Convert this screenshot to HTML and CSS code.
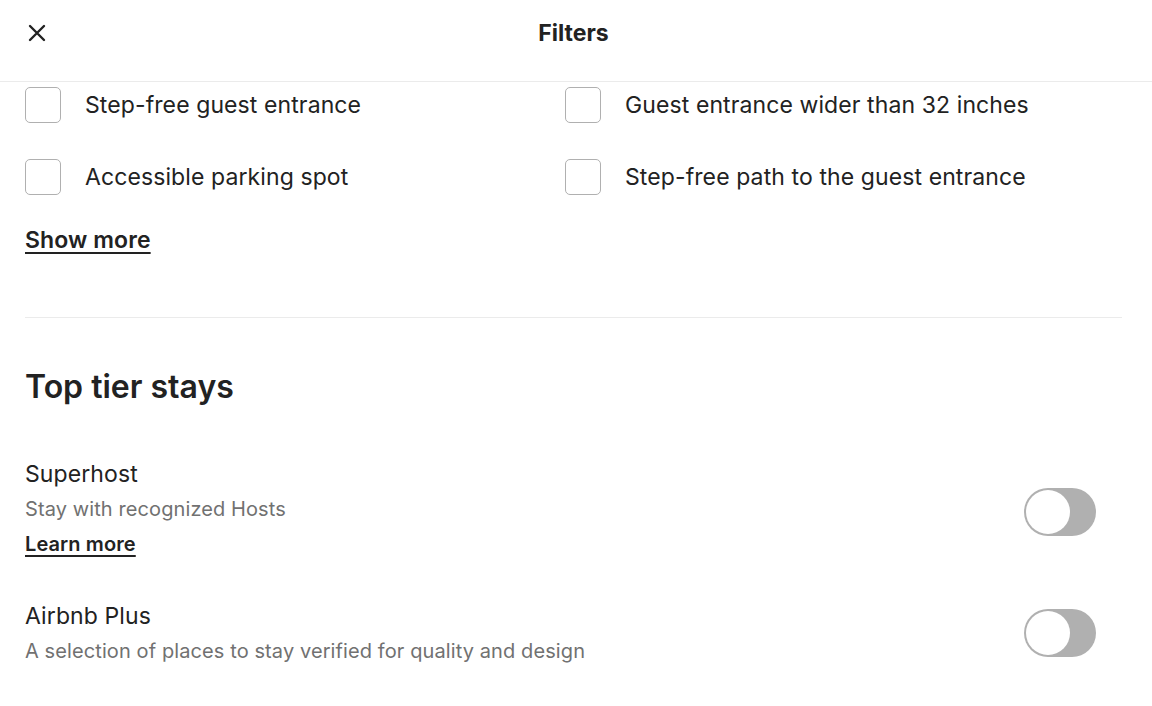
FILE: index.html
```html
<!DOCTYPE html>
<html lang="en">
<head>
<meta charset="utf-8">
<title>Filters</title>
<link rel="stylesheet" href="styles.css">
</head>
<body>
<header class="header">
  <button class="close" aria-label="Close">
    <svg viewBox="0 0 18 18" width="18" height="18" fill="none" stroke="#222" stroke-width="2.4" stroke-linecap="round"><path d="M2 2 L16 16 M16 2 L2 16"/></svg>
  </button>
  <h1 class="title">Filters</h1>
</header>
<main class="content">
  <div class="checks">
    <label class="check"><span class="box"></span><span class="check-label">Step-free guest entrance</span></label>
    <label class="check"><span class="box"></span><span class="check-label">Guest entrance wider than 32 inches</span></label>
    <label class="check"><span class="box"></span><span class="check-label">Accessible parking spot</span></label>
    <label class="check"><span class="box"></span><span class="check-label">Step-free path to the guest entrance</span></label>
  </div>
  <a class="link show-more" href="#">Show more</a>
  <hr class="divider">
  <h2 class="section-title">Top tier stays</h2>
  <div class="option option-first">
    <div class="option-text">
      <div class="option-name">Superhost</div>
      <div class="option-desc">Stay with recognized Hosts</div>
      <a class="link option-link" href="#">Learn more</a>
    </div>
    <span class="toggle"><span class="knob"></span></span>
  </div>
  <div class="option option-second">
    <div class="option-text">
      <div class="option-name">Airbnb Plus</div>
      <div class="option-desc">A selection of places to stay verified for quality and design</div>
    </div>
    <span class="toggle"><span class="knob"></span></span>
  </div>
</main>
</body>
</html>
```
FILE: styles.css
```css
* { box-sizing: border-box; }
html, body { margin: 0; padding: 0; background: #fff; }
body {
  font-family: Inter, "Noto Sans", "Liberation Sans", sans-serif;
  color: #222;
  width: 1152px;
  height: 706px;
  overflow: hidden;
}
.header {
  height: 82px;
  padding-bottom: 16px;
  border-bottom: 1px solid #ebebeb;
  display: flex;
  align-items: center;
  position: relative;
}
.close {
  position: absolute;
  left: 28px;
  top: 24px;
  width: 18px;
  height: 18px;
  padding: 0;
  border: 0;
  background: none;
  display: flex;
}
.title {
  flex: 1;
  margin: 0;
  padding-right: 5px;
  text-align: center;
  font-size: 23px;
  font-weight: 700;
  line-height: 66px;
}
.content {
  padding: 5px 30px 0 25px;
}
.checks {
  display: grid;
  grid-template-columns: 540px 1fr;
  row-gap: 36px;
}
.check {
  display: flex;
  align-items: center;
  gap: 24px;
  height: 36px;
}
.box {
  width: 36px;
  height: 36px;
  border: 1px solid #b0b0b0;
  border-radius: 5px;
  flex: none;
}
.check-label {
  font-size: 23px;
  letter-spacing: 0.1px;
}
.link {
  color: #222;
  font-weight: 600;
  text-decoration: underline;
  text-underline-offset: 4px;
  text-decoration-thickness: 2px;
}
.show-more {
  display: block;
  width: max-content;
  margin-top: 28px;
  font-size: 23px;
  line-height: 35px;
  letter-spacing: 0.1px;
}
.divider {
  border: 0;
  border-top: 1px solid #ebebeb;
  margin: 59px 0 0;
}
.section-title {
  margin: 49px 0 0;
  font-size: 32px;
  font-weight: 600;
  line-height: 40px;
}
.option {
  display: flex;
  align-items: center;
  justify-content: space-between;
  margin-top: 50px;
  padding-right: 26px;
}
.option-first .toggle { margin-top: 4px; }
.option-second { margin-top: 37px; }
.option-second .toggle { margin-top: -2px; }
.option-name {
  font-size: 23px;
  line-height: 35px;
  letter-spacing: 0.1px;
}
.option-desc {
  font-size: 20px;
  line-height: 35px;
  color: #717171;
  letter-spacing: 0.1px;
}
.option-link {
  display: block;
  width: max-content;
  font-size: 20px;
  line-height: 35px;
  letter-spacing: 0.1px;
}
.toggle {
  width: 72px;
  height: 48px;
  border-radius: 24px;
  background: #b0b0b0;
  display: flex;
  align-items: center;
  padding: 2px;
  flex: none;
}
.knob {
  width: 44px;
  height: 44px;
  border-radius: 50%;
  background: #fff;
}
```
